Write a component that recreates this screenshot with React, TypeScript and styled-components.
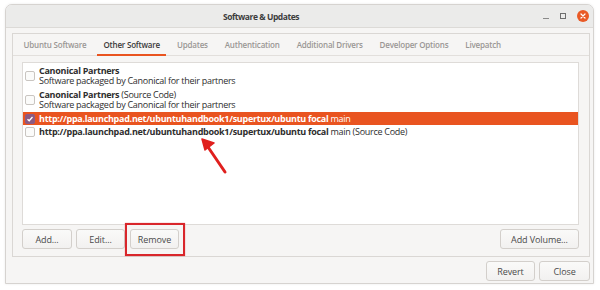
import React from "react";
import styled, { createGlobalStyle } from "styled-components";

const Global = createGlobalStyle`
  html, body { margin: 0; padding: 0; background: #ffffff; }
  body { font-family: "Open Sans", "Noto Sans", "DejaVu Sans", sans-serif; }
  * { box-sizing: border-box; }
`;

const Page = styled.div`
  position: relative;
  width: 600px;
  height: 290px;
  padding: 4px 6px 0 5px;
`;

const Window = styled.div`
  width: 589px;
  height: 280px;
  background: #f6f5f4;
  border: 1px solid #d6d3d0;
  border-radius: 7px 7px 0 0;
  box-shadow: 0 0 3px rgba(0, 0, 0, 0.08);
  display: flex;
  flex-direction: column;
`;

const TitleBar = styled.div`
  position: relative;
  height: 23px;
  flex: none;
  background: #ebebea;
  border-bottom: 1px solid #dcdad7;
  border-radius: 6px 6px 0 0;
  display: flex;
  align-items: center;
  justify-content: center;
  padding-right: 77px;
`;

const Title = styled.div`
  font-size: 8.5px;
  font-weight: 700;
  letter-spacing: -0.45px;
  color: #3d3d3d;
`;

const Controls = styled.div`
  position: absolute;
  right: 4px;
  top: 0;
  height: 22px;
  display: flex;
  align-items: center;
  gap: 11px;
`;

const Minimize = styled.div`
  width: 6px;
  height: 1px;
  background: #8a8a8a;
  margin-top: 4px;
`;

const Maximize = styled.div`
  width: 6px;
  height: 6px;
  border: 1px solid #6e6e6e;
`;

const CloseDot = styled.div`
  width: 12px;
  height: 12px;
  border-radius: 50%;
  background: #e95a26;
  display: flex;
  align-items: center;
  justify-content: center;
`;

const Body = styled.div`
  flex: 1;
  display: flex;
  flex-direction: column;
  padding: 5px 3px 3px 6px;
`;

const Notebook = styled.div`
  border: 1px solid #dad7d4;
  height: 224px;
  display: flex;
  flex-direction: column;
  background: #f6f5f4;
`;

const TabRow = styled.div`
  height: 22px;
  flex: none;
  display: flex;
  padding-left: 2px;
  border-bottom: 1px solid #e2dfdc;
`;

const Tab = styled.div<{ $active?: boolean }>`
  position: relative;
  padding: 0 8.5px;
  display: flex;
  align-items: center;
  font-size: 8px;
  font-weight: 600;
  letter-spacing: -0.2px;
  color: ${(p) => (p.$active ? "#3a3a3a" : "#9a9794")};
  ${(p) =>
    p.$active &&
    `&::after {
      content: "";
      position: absolute;
      left: 2px;
      right: 2px;
      bottom: -1px;
      height: 2px;
      background: #e95420;
    }`}
`;

const Panel = styled.div`
  flex: 1;
  display: flex;
  flex-direction: column;
  padding: 6px 10px 7px 9px;
  gap: 4px;
`;

const ListBox = styled.div`
  flex: 1;
  background: #ffffff;
  border: 1px solid #dedbd8;
  padding-top: 1px;
  display: flex;
  flex-direction: column;
`;

const Row = styled.div<{ $selected?: boolean; $double?: boolean }>`
  display: flex;
  align-items: center;
  padding: ${(p) => (p.$double ? "2px 0 2px 2px" : "1px 0 1px 2px")};
  background: ${(p) => (p.$selected ? "#e95420" : "transparent")};
  color: ${(p) => (p.$selected ? "#ffffff" : "#2e2e2e")};
`;

const Check = styled.div<{ $checked?: boolean }>`
  width: 10px;
  height: 10px;
  flex: none;
  border-radius: 2px;
  border: 1px solid ${(p) => (p.$checked ? "#8e5a86" : "#c9c5c1")};
  background: ${(p) => (p.$checked ? "#8a5a82" : "#fbfbfa")};
  display: flex;
  align-items: center;
  justify-content: center;
`;

const RowText = styled.div<{ $double?: boolean }>`
  margin-left: 4px;
  display: flex;
  flex-direction: column;
  font-size: 9px;
  letter-spacing: -0.28px;
  line-height: ${(p) => (p.$double ? "10px" : "11px")};
  white-space: nowrap;
`;

const Strong = styled.span`
  font-weight: 700;
`;

const Light = styled.span`
  font-weight: 400;
`;

const ButtonRow = styled.div`
  height: 20px;
  flex: none;
  display: flex;
  gap: 4px;
`;

const Button = styled.button<{ $w: number }>`
  width: ${(p) => p.$w}px;
  height: 20px;
  padding: 0;
  border: 1px solid #d3cfcb;
  border-radius: 3px;
  background: linear-gradient(#fafaf9, #f2f1f0);
  font-family: "Open Sans", "Noto Sans", sans-serif;
  font-size: 9px;
  letter-spacing: -0.1px;
  color: #4a4a4a;
  display: flex;
  align-items: center;
  justify-content: center;
`;

const Marked = styled.div`
  position: relative;
  margin-left: 1px;
  &::after {
    content: "";
    position: absolute;
    left: -5px;
    right: -6px;
    top: -6px;
    bottom: -7px;
    border: 2px solid #d9262b;
    box-shadow: 0 0 1px rgba(217, 38, 43, 0.6);
    pointer-events: none;
  }
`;

const Spacer = styled.div`
  flex: 1;
`;

const DialogButtons = styled.div`
  display: flex;
  justify-content: flex-end;
  gap: 4px;
  padding-top: 4px;
`;

const ArrowSvg = styled.svg`
  position: absolute;
  left: 195px;
  top: 134px;
`;

const tabs = [
  "Ubuntu Software",
  "Other Software",
  "Updates",
  "Authentication",
  "Additional Drivers",
  "Developer Options",
  "Livepatch",
];

export default function App() {
  return (
    <>
      <Global />
      <Page>
        <Window>
          <TitleBar>
            <Title>Software &amp; Updates</Title>
            <Controls>
              <Minimize />
              <Maximize />
              <CloseDot>
                <svg width="6" height="6" viewBox="0 0 6 6">
                  <path d="M1 1L5 5M5 1L1 5" stroke="#fff" strokeWidth="1.2" strokeLinecap="round" />
                </svg>
              </CloseDot>
            </Controls>
          </TitleBar>
          <Body>
            <Notebook>
              <TabRow>
                {tabs.map((t) => (
                  <Tab key={t} $active={t === "Other Software"}>
                    {t}
                  </Tab>
                ))}
              </TabRow>
              <Panel>
                <ListBox>
                  <Row $double>
                    <Check />
                    <RowText $double>
                      <Strong>Canonical Partners</Strong>
                      <span>Software packaged by Canonical for their partners</span>
                    </RowText>
                  </Row>
                  <Row $double>
                    <Check />
                    <RowText $double>
                      <span>
                        <Strong>Canonical Partners</Strong> (Source Code)
                      </span>
                      <span>Software packaged by Canonical for their partners</span>
                    </RowText>
                  </Row>
                  <Row $selected>
                    <Check $checked>
                      <svg width="8" height="8" viewBox="0 0 8 8">
                        <path d="M1.5 4.2L3.2 5.8L6.5 2" stroke="#fff" strokeWidth="1.3" fill="none" />
                      </svg>
                    </Check>
                    <RowText>
                      <span>
                        <Strong>http://ppa.launchpad.net/ubuntuhandbook1/supertux/ubuntu focal</Strong>{" "}
                        <Light>main</Light>
                      </span>
                    </RowText>
                  </Row>
                  <Row>
                    <Check />
                    <RowText>
                      <span>
                        <Strong>http://ppa.launchpad.net/ubuntuhandbook1/supertux/ubuntu focal</Strong>{" "}
                        <Light>main (Source Code)</Light>
                      </span>
                    </RowText>
                  </Row>
                </ListBox>
                <ButtonRow>
                  <Button $w={50}>Add...</Button>
                  <Button $w={49}>Edit...</Button>
                  <Marked>
                    <Button $w={49}>Remove</Button>
                  </Marked>
                  <Spacer />
                  <Button $w={79}>Add Volume...</Button>
                </ButtonRow>
              </Panel>
            </Notebook>
            <DialogButtons>
              <Button $w={49}>Revert</Button>
              <Button $w={51}>Close</Button>
            </DialogButtons>
          </Body>
        </Window>
        <ArrowSvg width="40" height="45" viewBox="0 0 40 45">
          <path d="M30 38L13 13" stroke="#e0201e" strokeWidth="3" strokeLinecap="round" />
          <path d="M7 5L19 9L10 16Z" fill="#e0201e" stroke="#e0201e" strokeWidth="1.5" strokeLinejoin="round" />
        </ArrowSvg>
      </Page>
    </>
  );
}
